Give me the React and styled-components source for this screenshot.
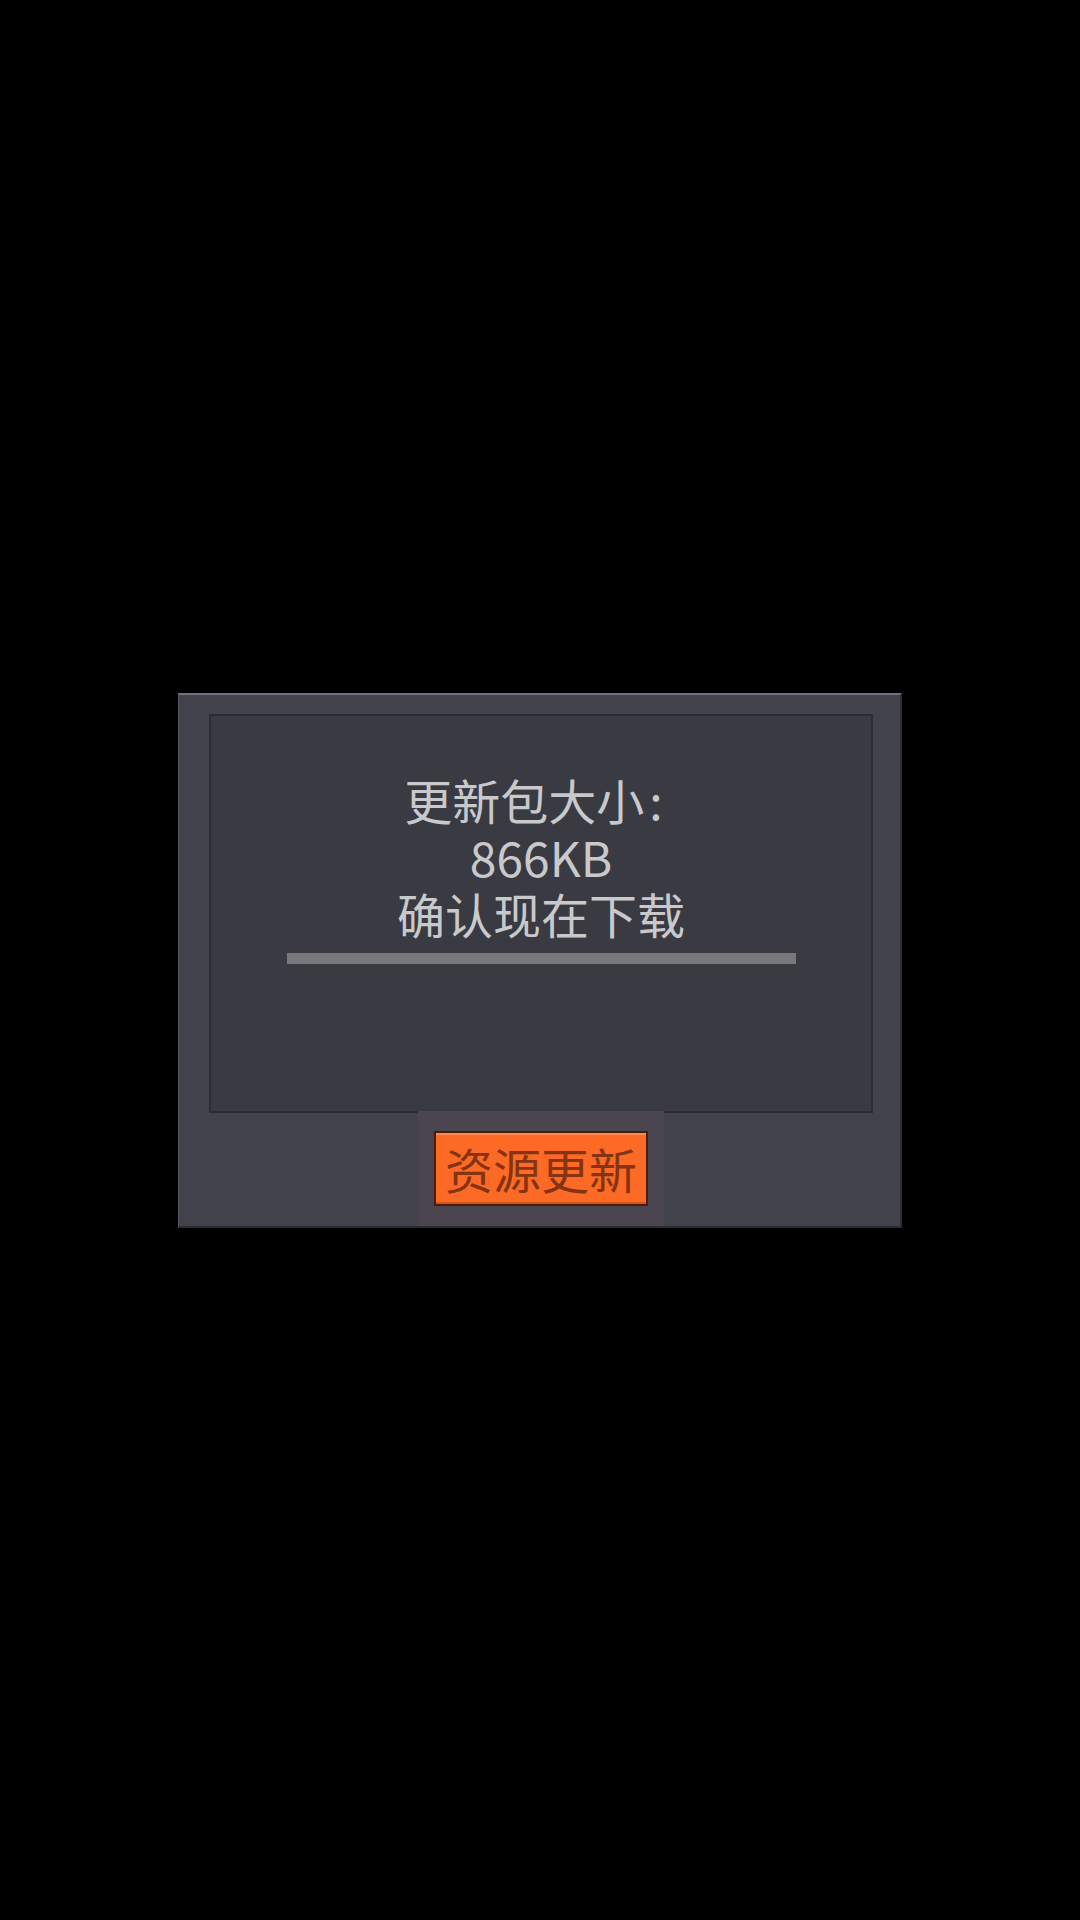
import React from 'react'
import styled, { createGlobalStyle } from 'styled-components'

const Global = createGlobalStyle`
  html, body {
    margin: 0;
    padding: 0;
    background: #000;
  }
  body {
    font-family: "Noto Sans CJK SC", "Noto Sans", sans-serif;
  }
`

const Screen = styled.div`
  width: 1080px;
  height: 1920px;
  display: flex;
  align-items: center;
  justify-content: center;
  background: #000;
`

const Dialog = styled.div`
  box-sizing: border-box;
  width: 724px;
  height: 535px;
  background: #42424c;
  border-top: 2px solid #70707e;
  border-left: 1px solid #55555f;
  border-right: 2px solid #2c2c33;
  border-bottom: 2px solid #2c2c33;
  display: flex;
  flex-direction: column;
  padding: 19px 27px 0 30px;
`

const Content = styled.div`
  box-sizing: border-box;
  height: 399px;
  background: #393a42;
  border: 2px solid #2c2d34;
  display: flex;
  flex-direction: column;
  align-items: center;
  padding-top: 55px;
`

const Line = styled.div`
  font-size: 48px;
  line-height: 57px;
  color: #c9c9cb;
  text-align: center;
`

const Colon = styled.span`
  margin-left: 5px;
  padding-right: 15px;
`

const Bar = styled.div`
  width: 509px;
  height: 11px;
  margin-top: 11px;
  background: #77777c;
`

const Footer = styled.div`
  flex: 1;
  display: flex;
  justify-content: center;
  margin-top: -2px;
`

const Glow = styled.div`
  width: 246px;
  display: flex;
  align-items: center;
  justify-content: center;
  background: #4a454f;
`

const Button = styled.button`
  box-sizing: border-box;
  width: 214px;
  height: 75px;
  padding: 0;
  background: #fd6a25;
  border: 2px solid #4a1d08;
  box-shadow: inset 0 2px 0 #ff8a50, inset 0 -2px 0 #d9541a;
  color: #863312;
  font-family: "Noto Sans CJK SC", sans-serif;
  font-size: 48px;
  line-height: 1;
  cursor: pointer;
`

export default function App() {
  return (
    <>
      <Global />
      <Screen>
        <Dialog>
          <Content>
            <Line>
              更新包大小<Colon>:</Colon>
            </Line>
            <Line>866KB</Line>
            <Line>确认现在下载</Line>
            <Bar />
          </Content>
          <Footer>
            <Glow>
              <Button>资源更新</Button>
            </Glow>
          </Footer>
        </Dialog>
      </Screen>
    </>
  )
}
